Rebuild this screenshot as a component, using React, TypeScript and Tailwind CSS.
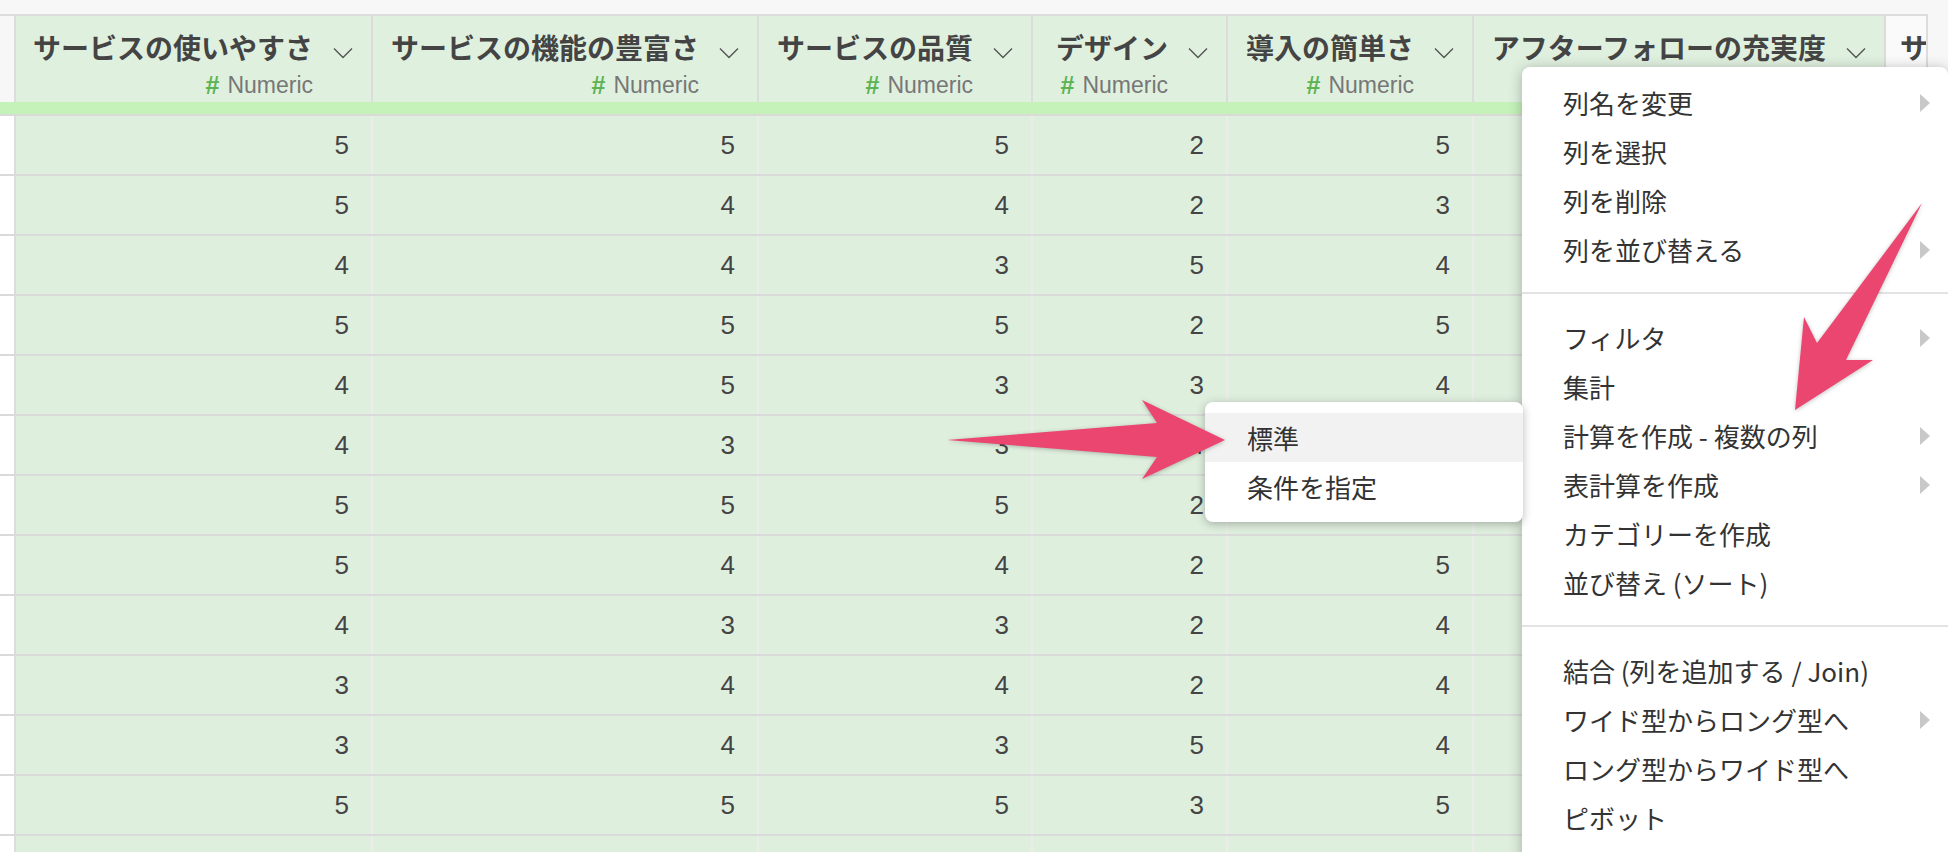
const columns = [
  { name: 'サービスの使いやすさ', w: 'w-[357px]' },
  { name: 'サービスの機能の豊富さ', w: 'w-[386px]' },
  { name: 'サービスの品質', w: 'w-[274px]' },
  { name: 'デザイン', w: 'w-[195px]' },
  { name: '導入の簡単さ', w: 'w-[246px]' },
  { name: 'アフターフォローの充実度', w: 'w-[412px]' },
]

const rows = [
  [5, 5, 5, 2, 5, 4],
  [5, 4, 4, 2, 3, 4],
  [4, 4, 3, 5, 4, 3],
  [5, 5, 5, 2, 5, 5],
  [4, 5, 3, 3, 4, 4],
  [4, 3, 3, 4, 4, 3],
  [5, 5, 5, 2, 4, 5],
  [5, 4, 4, 2, 5, 4],
  [4, 3, 3, 2, 4, 3],
  [3, 4, 4, 2, 4, 4],
  [3, 4, 3, 5, 4, 3],
  [5, 5, 5, 3, 5, 5],
  [4, 4, 4, 3, 4, 4],
]

const menuGroups = [
  [
    { label: '列名を変更', sub: true },
    { label: '列を選択' },
    { label: '列を削除' },
    { label: '列を並び替える', sub: true },
  ],
  [
    { label: 'フィルタ', sub: true },
    { label: '集計' },
    { label: '計算を作成 - 複数の列', sub: true },
    { label: '表計算を作成', sub: true },
    { label: 'カテゴリーを作成' },
    { label: '並び替え (ソート)' },
  ],
  [
    { label: '結合 (列を追加する / Join)' },
    { label: 'ワイド型からロング型へ', sub: true },
    { label: 'ロング型からワイド型へ' },
    { label: 'ピボット' },
  ],
]

function Chevron() {
  return (
    <svg
      className="ml-[20px] mt-[16px] shrink-0"
      width="20"
      height="12"
      viewBox="0 0 20 12"
      fill="none"
    >
      <path d="M1 1.5 L10 10.5 L19 1.5" stroke="#555" strokeWidth="1.4" />
    </svg>
  )
}

function HeaderCell({ name, w }: { name: string; w: string }) {
  return (
    <div
      className={`${w} flex h-full shrink-0 justify-end border-r-2 border-[#dcdcdc] bg-[#e0f0df] pr-[18px] pt-[15px]`}
    >
      <div className="flex flex-col items-end">
        <span className="whitespace-nowrap font-['Noto_Sans_CJK_JP',sans-serif] text-[28px] font-bold leading-[33px] text-[#444]">
          {name}
        </span>
        <span className="mt-[8px] flex items-center gap-[8px] font-['Liberation_Sans',sans-serif] text-[23px] leading-[26px]">
          <span className="text-[25px] font-bold text-[#5cb352]">#</span>
          <span className="text-[#777]">Numeric</span>
        </span>
      </div>
      <Chevron />
    </div>
  )
}

function SubArrow() {
  return (
    <span className="h-0 w-0 shrink-0 border-y-[9px] border-l-[10px] border-y-transparent border-l-[#c8c8c8]" />
  )
}

export default function App() {
  return (
    <div className="relative h-[852px] w-[1948px] overflow-hidden bg-[#f7f7f7] font-['Liberation_Sans','Noto_Sans_CJK_JP',sans-serif]">
      {/* --- Top strip --- */}
      <div className="h-[16px] w-[1928px] border-b-2 border-[#dddddd]" />

      {/* --- Header --- */}
      <div className="flex h-[86px]">
        <div className="h-full w-[16px] shrink-0 border-r-2 border-[#dcdcdc] bg-[#f7f7f7]" />
        {columns.map((c) => (
          <HeaderCell key={c.name} name={c.name} w={c.w} />
        ))}
        <div className="h-full w-[42px] shrink-0 overflow-hidden border-r-2 border-[#dcdcdc] bg-[#fafafa] pl-[14px] pt-[15px] font-['Noto_Sans_CJK_JP',sans-serif] text-[28px] font-bold leading-[33px] text-[#444]">
          サ
        </div>
      </div>

      {/* --- Green bar --- */}
      <div className="h-[14px] w-[1928px] border-b-2 border-[#dadada] bg-[#c4f2b9]" />

      {/* --- Rows --- */}
      {rows.map((r, i) => (
        <div key={i} className="flex h-[60px] w-[1928px] border-b-2 border-[#dadada] bg-white">
          <div className="w-[16px] shrink-0 border-r-2 border-[#dcdcdc]" />
          {r.map((v, j) => (
            <div
              key={j}
              className={`${columns[j].w} flex shrink-0 items-center justify-end border-r-2 border-[#ececec] bg-[#dfefde] pr-[22px] text-[26px] text-[#444]`}
            >
              {v}
            </div>
          ))}
          <div className="w-[42px] shrink-0" />
        </div>
      ))}

      {/* --- Column menu --- */}
      <div className="absolute left-[1522px] top-[67px] h-[820px] w-[426px] rounded-[8px] bg-white pt-[11px] font-['Noto_Sans_CJK_JP',sans-serif] text-[26px] text-[#333] shadow-[0_2px_14px_rgba(0,0,0,0.28)]">
        {menuGroups.map((g, gi) => (
          <div key={gi}>
            {gi > 0 && <div className="mb-[19px] mt-[18px] h-[2px] bg-[#e3e3e3]" />}
            {g.map((item) => (
              <div
                key={item.label}
                className="flex h-[49px] items-center justify-between pl-[41px] pr-[18px]"
              >
                <span className="whitespace-nowrap">{item.label}</span>
                {item.sub && <SubArrow />}
              </div>
            ))}
          </div>
        ))}
      </div>

      {/* --- Sub menu --- */}
      <div className="absolute left-[1205px] top-[402px] w-[318px] rounded-[8px] bg-white py-[11px] font-['Noto_Sans_CJK_JP',sans-serif] text-[26px] text-[#333] shadow-[0_2px_10px_rgba(0,0,0,0.28)]">
        <div className="flex h-[49px] items-center bg-[#f2f2f2] pl-[42px]">標準</div>
        <div className="flex h-[49px] items-center pl-[42px]">条件を指定</div>
      </div>

      {/* --- Annotation arrows --- */}
      <svg
        className="pointer-events-none absolute left-0 top-0 drop-shadow-[0_1px_2px_rgba(0,0,0,0.25)]"
        width="1948"
        height="852"
        viewBox="0 0 1948 852"
      >
        <polygon
          fill="#ea4670"
          points="947,440 1157,423 1142,400 1225,440 1142,479 1157,457"
        />
        <polygon
          fill="#ea4670"
          points="1922,203 1846,360 1873,360 1795,410 1804,317 1817,343"
        />
      </svg>
    </div>
  )
}
